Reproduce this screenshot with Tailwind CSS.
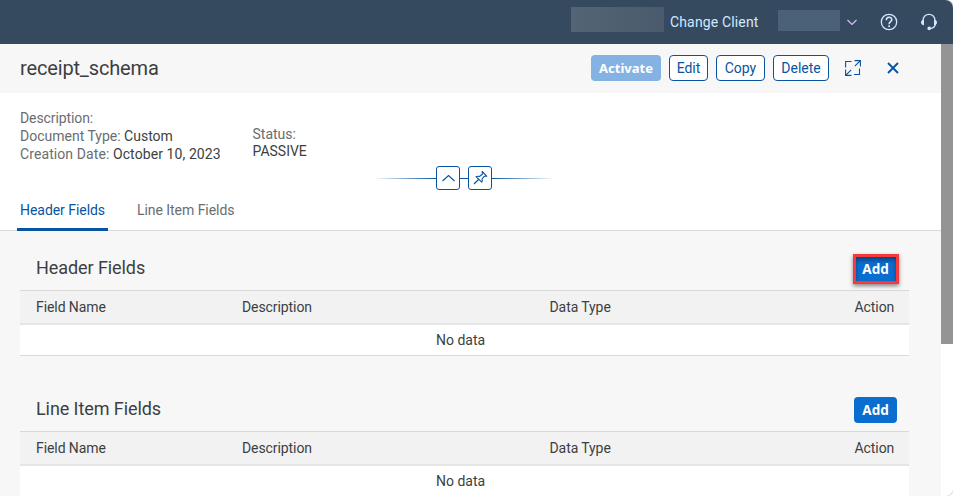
<!DOCTYPE html>
<html lang="en">
<head>
<meta charset="utf-8">
<title>receipt_schema</title>
<script src="https://cdn.jsdelivr.net/npm/@tailwindcss/browser@4"></script>
</head>
<body class="bg-white">
<div class="relative flex h-[496px] w-[953px] flex-col overflow-hidden rounded-r-[8px] bg-white font-[Roboto,'Noto_Sans',sans-serif] text-[14px] leading-[18px] text-[#3b3f43] shadow-[0_0_2px_#888]">
  <header class="flex h-11 shrink-0 items-center bg-[#354a5f] pl-[571px] text-[#d1e8ff]">
    <div class="-mt-[5px] h-[25px] w-[93px] bg-linear-to-r from-[#536475] to-[#4a5b6d]"></div>
    <span class="ml-[6px] w-[88px] whitespace-nowrap tracking-[0.15px]">Change Client</span>
    <div class="-mt-[3px] ml-5 h-[21px] w-[62px] bg-[#4b6178]"></div>
    <svg class="ml-[6px] h-4 w-[12px]" viewBox="0 0 12 16" fill="none" stroke="#dcc4ff" stroke-width="1.1"><path d="M1.5 6 6 10.5 10.500 6"/></svg>
    <svg class="ml-[22px] h-[18px] w-[18px]" viewBox="0 0 18 18" fill="none" stroke="#d1e8ff" stroke-width="1.3"><circle cx="9" cy="9" r="7.700"/><path d="M6.300 7.200C6.300 3.200 11.800 3.300 11.800 6.800 11.800 8.900 9.100 8.600 9.100 11.200" stroke-width="1.600"/><circle cx="9.100" cy="13.200" r="1" fill="#d1e8ff" stroke="none"/></svg>
    <svg class="ml-[22px] h-[18px] w-[18px]" viewBox="0 0 18 18" fill="none" stroke="#d1e8ff" stroke-width="1.300"><path d="M3 8C2.500-.9 15.500-.9 15 8M15.500 11Q14.500 15.400 10 15.400"/><path d="M4 6.500V12.200C0 12 0 7 4 6.500ZM14 6.500V12.200C18 12 18 7 14 6.500Z" fill="#d1e8ff" stroke="none"/><circle cx="9.200" cy="15.400" r="1.800" fill="#d1e8ff" stroke="none"/></svg>
  </header>
  <div class="flex h-[452px]">
    <main class="w-[941px] shrink-0 bg-[#f7f7f7]">
      <div class="flex h-[49px] items-center pb-px pl-5 text-[#0854a0]">
        <h1 class="w-[571px] text-[20px] leading-6 tracking-[-0.15px] text-[#3b3f43]">receipt_schema</h1>
        <button class="h-[26px] w-[70px] rounded-[4px] bg-[#84b2e3] font-['Noto_Sans',sans-serif] text-[13px] font-bold text-white">Activate</button>
        <button class="ml-2 h-[26px] w-[39px] rounded-[4px] border border-[#0854a0] bg-white">Edit</button>
        <button class="ml-2 h-[26px] w-[49px] rounded-[4px] border border-[#0854a0] bg-white">Copy</button>
        <button class="ml-2 h-[26px] w-[56px] rounded-[4px] border border-[#0854a0] bg-white">Delete</button>
        <svg class="ml-4 h-[16px] w-[16px]" viewBox="0 0 16 16" fill="none" stroke="currentColor" stroke-width="1.100"><path d="M.6 7.500V1.500H6.500M9.500 .6H15.400V6.500M15.400.6 9.800 6.200M14.500 8.500V14.500H9M.6 9.500V15.400H6.500M.6 15.400 6.200 9.800"/></svg>
        <svg class="ml-[26px] h-[12px] w-[12px]" viewBox="0 0 12 12" fill="none" stroke="currentColor" stroke-width="1.900"><path d="M1 1 11 11M11 1 1 11"/></svg>
      </div>
      <section class="relative h-[138px] border-b border-[#d9d9d9] bg-white">
        <div class="flex h-[98px] pl-5 pt-4 text-[#6a6d70]">
          <div class="w-[232.500px] whitespace-nowrap">
            <p class="tracking-[-0.1px]">Description:</p>
            <p>Document Type: <span class="text-[#3b3f43]">Custom</span></p>
            <p class="tracking-[0.09px]">Creation Date: <span class="text-[#3b3f43]">October 10, 2023</span></p>
          </div>
          <div class="pt-[17px] leading-[17px]">
            <p>Status:</p>
            <p class="text-[#3b3f43]">PASSIVE</p>
          </div>
        </div>
        <nav class="flex h-10 pl-[17px]">
          <a class="h-[40px] w-[91px] rounded-t-none border-b-[3px] border-[#0854a0] pl-[3px] pt-[10px] tracking-[-0.05px] text-[#0854a0]">Header Fields</a>
          <a class="ml-[29px] pt-[10px] tracking-[-0.05px] text-[#6a6d70]">Line Item Fields</a>
        </nav>
        <div class="absolute left-[373px] top-[73px] flex h-6 w-[182px] items-center">
          <i class="h-px w-[63px] bg-linear-to-r from-transparent to-[#0854a0]"></i>
          <button class="h-6 w-6 rounded-[3px] border border-[#0854a0] bg-white"><svg class="h-[22px] w-[22px]" viewBox="0 0 22 22" fill="none" stroke="#0854a0" stroke-width="1.100"><path d="M5.500 14 11.500 8.500 17.500 14"/></svg></button>
          <i class="h-px w-2 bg-[#0854a0]"></i>
          <button class="h-6 w-6 rounded-[3px] border border-[#0854a0] bg-white"><svg class="h-[22px] w-[22px]" viewBox="0 0 22 22" fill="none" stroke="#0854a0" stroke-width="1.100" stroke-linejoin="round"><path d="M5 17 9.500 12.500M7 9.700 12.800 15.200Q13.700 13.500 13 12L15.200 9.300 17.800 9.300 13.300 4.500 13.300 7.300 10.400 9.500Q8.500 8.900 7 9.700Z"/></svg></button>
          <i class="h-px w-[63px] bg-linear-to-r from-[#0854a0] to-transparent"></i>
        </div>
      </section>
      <section class="ml-5 w-[889px] pt-[19px]">
        <div class="relative flex h-[40px] justify-between pl-4 pr-3">
          <h2 class="pt-[7px] text-[18px] leading-[22px] tracking-[-0.08px]">Header Fields</h2>
          <button class="mt-[6px] h-[26px] w-[43px] rounded-[4px] bg-[#0a6ed1] font-['Noto_Sans',sans-serif] text-[13.500px] font-bold text-white">Add</button>
          <div class="absolute left-[833px] top-[4px] h-[30px] w-[46px] border-[3px] border-[#f5393c] shadow-[0_2px_4px_#0007,inset_0_3px_4px_#0006]"></div>
        </div>
        <div class="flex h-[35px] items-center border-b-2 border-t border-b-[#e5e5e5] border-t-[#d9d9d9] bg-[#f2f2f2] pl-4 tracking-[-0.08px]"><span class="w-[206px]">Field Name</span><span class="w-[307.500px]">Description</span><span class="w-[305px]">Data Type</span><span>Action</span></div>
        <div class="flex h-[31px] items-center border-b border-[#d9d9d9] bg-white pl-[416px]"><span>No data</span></div>
      </section>
      <section class="ml-5 w-[889px] pt-[35px]">
        <div class="flex h-[40px] justify-between pl-4 pr-3">
          <h2 class="pt-[7px] text-[18px] leading-[22px] tracking-[-0.08px]">Line Item Fields</h2>
          <button class="mt-[6px] h-[26px] w-[43px] rounded-[4px] bg-[#0a6ed1] font-['Noto_Sans',sans-serif] text-[13.500px] font-bold text-white">Add</button>
        </div>
        <div class="flex h-[35px] items-center border-b-2 border-t border-b-[#e5e5e5] border-t-[#d9d9d9] bg-[#f2f2f2] pl-4 tracking-[-0.08px]"><span class="w-[206px]">Field Name</span><span class="w-[307.500px]">Description</span><span class="w-[305px]">Data Type</span><span>Action</span></div>
        <div class="flex h-[30px] items-center bg-white pl-[416px]"><span>No data</span></div>
      </section>
    </main>
    <div class="w-3 bg-white"><div class="h-[300px] bg-[#949494]"></div></div>
  </div>
</div>
</body>
</html>
